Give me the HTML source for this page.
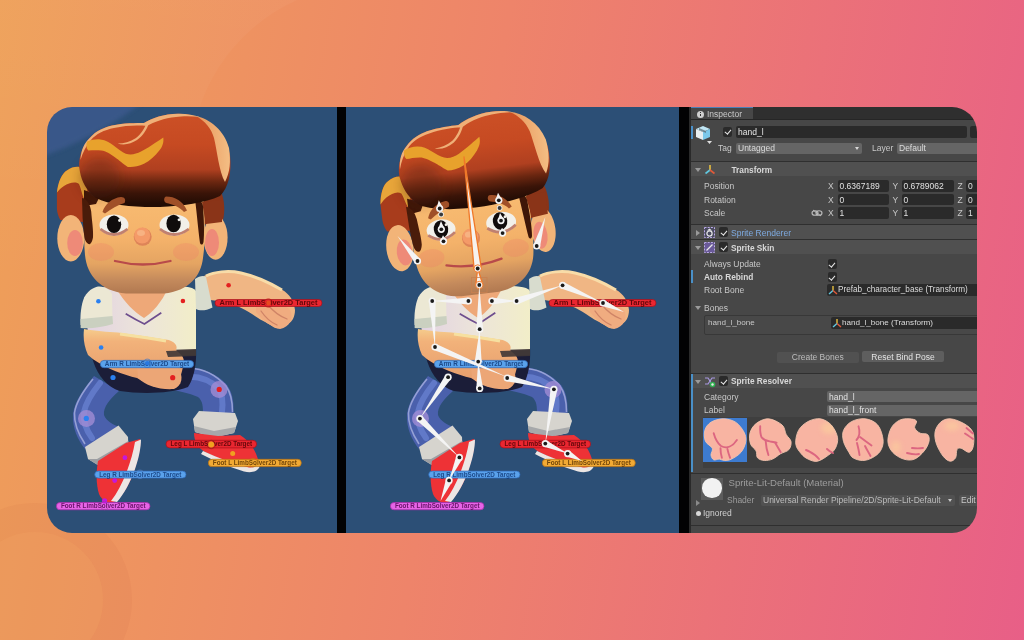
<!DOCTYPE html>
<html><head><meta charset="utf-8">
<style>
html,body{margin:0;padding:0;}
body{width:1024px;height:640px;overflow:hidden;position:relative;font-family:"Liberation Sans",sans-serif;
background:linear-gradient(100deg,#eea058 0%,#ee846a 45%,#e85f87 100%);}
.a{position:absolute;}
#clip{position:absolute;left:0;top:0;width:1024px;height:640px;clip-path:inset(107px 47px 107px 47px round 25px);will-change:transform;}
.t{position:absolute;font-size:8.5px;line-height:12px;height:12px;white-space:nowrap;color:#c8c8c8;}
.b{font-weight:bold;font-size:8.3px;}
.fld{position:absolute;background:#2a2a2a;border-radius:2px;}
.drp{position:absolute;background:#656565;border-radius:2px;}
.sep{position:absolute;left:691px;width:286px;height:1px;background:#2f2f2f;}
.hdr{position:absolute;left:691px;width:286px;background:#505050;}
.cb{position:absolute;width:9px;height:10px;background:#2a2a2a;border-radius:2px;}
.cb:after{content:"";position:absolute;left:2.5px;top:1.5px;width:2.5px;height:5px;border:solid #e8e8e8;border-width:0 1.3px 1.3px 0;transform:rotate(40deg);}
</style></head><body>
<svg class="a" id="bgdeco" style="left:0;top:0;" width="1024" height="640" viewBox="0 0 1024 640">
  <defs><linearGradient id="lgt" x1="0" y1="0" x2="0" y2="640" gradientUnits="userSpaceOnUse"><stop offset="0" stop-color="#fff" stop-opacity="0.035"/><stop offset="0.17" stop-color="#fff" stop-opacity="0.025"/><stop offset="0.45" stop-color="#fff" stop-opacity="0"/></linearGradient></defs><path d="M0,0 L297,0 A181,181 0 0 0 190,165 L190,640 L0,640 Z" fill="url(#lgt)"/>
  <circle cx="35" cy="600" r="97" fill="#b84020" opacity="0.05"/>
  <circle cx="35" cy="600" r="68" fill="#f0a060" opacity="0.35"/>
</svg>
<div id="clip">
  <!-- left panel -->
  <div class="a" style="left:47px;top:107px;width:290px;height:426px;background:#2c4f76;"></div>
  <div class="a" style="left:337px;top:107px;width:9px;height:426px;background:#020203;"></div>
  <div class="a" style="left:346px;top:107px;width:333px;height:426px;background:#2c4f76;"></div>
  <div class="a" style="left:679px;top:107px;width:10px;height:426px;background:#020203;"></div>
  <svg class="a" style="left:0;top:0;" width="1024" height="640" viewBox="0 0 1024 640">
<defs>
  <filter id="blur2" x="-10%" y="-10%" width="120%" height="120%"><feGaussianBlur stdDeviation="2"/></filter>
  <filter id="blur6" x="-50%" y="-50%" width="200%" height="200%"><feGaussianBlur stdDeviation="6"/></filter>
  <radialGradient id="glow" cx="50" cy="22" r="130" gradientUnits="userSpaceOnUse">
    <stop offset="0" stop-color="#3f5b90"/><stop offset="0.97" stop-color="#3d5a8e"/><stop offset="1" stop-color="#3d5a8e" stop-opacity="0"/>
  </radialGradient>
  <linearGradient id="faceG" x1="0" y1="194" x2="0" y2="294" gradientUnits="userSpaceOnUse">
    <stop offset="0" stop-color="#f8bc72"/><stop offset="0.45" stop-color="#f4b26a"/><stop offset="0.7" stop-color="#e4a462"/><stop offset="0.86" stop-color="#c48a5c"/><stop offset="1" stop-color="#b07850"/>
  </linearGradient>
  <linearGradient id="hairG" x1="0" y1="113" x2="0" y2="204" gradientUnits="userSpaceOnUse">
    <stop offset="0" stop-color="#cc5026"/><stop offset="0.35" stop-color="#c64a22"/><stop offset="0.62" stop-color="#b04020"/><stop offset="0.76" stop-color="#6a2610"/><stop offset="0.88" stop-color="#3a1408"/><stop offset="1" stop-color="#220c04"/>
  </linearGradient>
  <linearGradient id="rimG" x1="200" y1="0" x2="230" y2="0" gradientUnits="userSpaceOnUse">
    <stop offset="0" stop-color="#e89a60"/><stop offset="1" stop-color="#f4be84"/>
  </linearGradient>
  <linearGradient id="shirtG" x1="85" y1="0" x2="197" y2="0" gradientUnits="userSpaceOnUse">
    <stop offset="0" stop-color="#e2d2e2"/><stop offset="0.5" stop-color="#ece4da"/><stop offset="1" stop-color="#f2eec8"/>
  </linearGradient>
  <linearGradient id="armG" x1="0" y1="326" x2="0" y2="388" gradientUnits="userSpaceOnUse">
    <stop offset="0" stop-color="#f6d290"/><stop offset="0.25" stop-color="#f2b27a"/><stop offset="1" stop-color="#e49a6a"/>
  </linearGradient>
  <g id="body">
    <!-- left leg -->
    <path d="M94,376 C84,389 75,400 73,414 C72,428 78,440 85,449 L121,428 C114,425 106,421 104,415 C103,407 110,399 119,391 Z" fill="#4a60ac"/>
    <path d="M100,383 C92,393 86,402 84,412 C83,422 86,430 92,438" fill="none" stroke="#6680d0" stroke-width="6" opacity="0.8" stroke-linecap="round"/>
    <path d="M93,379 C84,390 76,401 74.5,413 C74,424 79,435 85,444" fill="none" stroke="#a8b0e0" stroke-width="1.6" opacity="0.8"/>
    <circle cx="86.5" cy="418.5" r="8.5" fill="#a08cd4" opacity="0.8"/>
    <path d="M85,447 L118.5,425.6 L128,437 L128.5,448 L98.6,465.5 L88,459 Z" fill="#d6d4ce"/>
    <path d="M88,459 L98.6,465.5 L128.5,448 L128.3,441 L97,459 Z" fill="#9c9ea2"/>
    <path d="M98,461 L126,443 L140,439 C141,447 139,456 133,474 C128,488 121,497 114,502 C109,504 103,502 99,494 C96,484 96,472 98,461 Z" fill="#ee3236"/>
    <path d="M135,442 L141,439.5 C141,455 132,485 117,502 L111,501 C123,486 132,460 135,442 Z" fill="#ece6e4"/>
    <!-- right leg -->
    <path d="M184,368 C198,366 215,372 227,385 C233,393 234,404 233.5,415 L203,415 C203,407 203,401 198,397 C188,393 180,391 172,390 Z" fill="#4a60ac"/>
    <path d="M186,377 C198,376 210,380 219,389 C223,396 223,404 222,412" fill="none" stroke="#6680d0" stroke-width="6" opacity="0.8" stroke-linecap="round"/>
    <path d="M188,368.5 C201,368 215,374 226,386 C231,393 232.5,402 232.5,412" fill="none" stroke="#a8b0e0" stroke-width="1.5" opacity="0.8"/>
    <circle cx="219" cy="389.5" r="8.5" fill="#a08cd4" opacity="0.8"/>
    <path d="M193,419 L199,411 L235,413 L238,421 L234,433 L214,437.5 L195,432 Z" fill="#d6d4ce"/>
    <path d="M195,432 L214,437.5 L234,433 L236,427 L214,431 L194,426 Z" fill="#a6a8aa"/>
    <path d="M194,433 L218,436 L240,435 C250,441 256,451 258.5,461 C258,467 253,469 247,468 C233,464 217,458 205,452 C198,448 194,441 194,433 Z" fill="#ee3236"/>
    <path d="M203,451 C218,458 234,464 249,467.5 C254,468 257,466 258.5,462 L259.5,467 C257,472 251,473 244,471.5 C229,467 214,461 201,454 Z" fill="#ece6e4"/>
    <!-- belt -->
    <path d="M90,350 L196,348 C197,365 193,380 188,387 C170,394 140,394 120,391 C104,386 95,372 90,350 Z" fill="#1b1d38"/>
    <!-- shirt -->
    <path d="M84,298 C92,289 104,286 118,286 L168,286 C182,286 192,286 196,291 L196,352 C170,357 120,357 90,350 Z" fill="url(#shirtG)"/>
    <path d="M116,288 L168,288 C162,302 152,313 144,318 C134,312 124,302 116,288 Z" fill="#eea878"/>
    <path d="M125.7,313.8 Q136,320 144.4,324 Q152,319 161.3,312.8" fill="none" stroke="#6e4e8e" stroke-width="1.7"/>
    <path d="M167,350 L196,349 L196,355 L168,356 Z" fill="#4a4040"/>
    <!-- extended arm -->
    <path d="M204,276 C212,272 228,269 241,272.5 C255,276 270,283 282.5,290 C289,294 294,300 295,310 C295,317 292,322 288,324 C282,329 276,330 272,326 C266,322 260,320 252,314 C240,306 228,302 210,300 Z" fill="#f0b684"/>
    <path d="M206,276 C214,272 228,270 241,273 C255,276 270,283 282,290" fill="none" stroke="#f8dca8" stroke-width="3"/>
    <path d="M256,302 C266,298 282,301 290,310 C294,318 290,327 280,329 C271,327 263,321 256,312 Z" fill="#f0ac80"/><path d="M261,311 C265,317 270,322 277,325 M268,305 C273,311 279,316 287,319" fill="none" stroke="#cf8466" stroke-width="1.3" stroke-linecap="round"/>
    <path d="M195,279 C199,276 204,275 206,277 L212.5,307.5 C206,311 199,311 196,309 Z" fill="#d8dcce"/>
    <!-- left sleeve + forearm -->
    <path d="M84,329 C95,331 108,332 118,332.5 C135,335 150,337 168.8,340 C175,342 178,346 176,350 C180,354 184,356 184,362 C182,372 180,380 176,386 C166,390 150,386 137,378 C120,374 100,366 88,355 C84,346 83,338 84,329 Z" fill="url(#armG)"/>
    <path d="M120,334 C135,336 150,338 166,341" fill="none" stroke="#f6e0a0" stroke-width="3"/>
    <path d="M137,366 C148,362 168,362 178,368 C184,376 182,386 174,389 C160,390 146,386 138,378 Z" fill="#eca676"/>
    <path d="M166,351 L196,350 L196,356 L168,357 Z" fill="#3e3636" opacity="0.9"/>
    <path d="M84.4,297 C89,289 96,286.6 99.4,286.6 C106,287 110,290 112,294 L112.5,320.3 C103,323 91,325 80.6,325 C80,315 81,305 84.4,297 Z" fill="#ece8d4"/>
    <path d="M80.6,319 L112.5,316 L113,324 C103,327 91,329 80.6,328 Z" fill="#cad0c0"/>
  </g>
  <g id="head">
    <!-- side hair left -->
    <path d="M56.9,192.6 C58,182 62,173 67.2,170.3 C71,167.5 75,166.5 79.2,166.9 C85,168 88,178 89.5,191 C90.5,200 91,206 91.2,211.5 L92,222 L82.6,222 L60.3,220 C58,216 57,212 56.9,208 Z" fill="#a83c1c"/>
    <path d="M56.9,192.6 C58,182 62,173 67.2,170.3 C71,167.5 75,166.5 79.2,166.9 C84,168 87,176 88,186 C87,192 86,197 84.4,199.5 C82,195 81,188 79,184 C75,181 69,183 64,186 C61,188 59,190 56.9,192.6 Z" fill="#e8a63a"/>
    <!-- side hair right -->
    <path d="M194,196 L222,194 C225,204 225,214 222,224 L214,226 L203,224 Z" fill="#8a3418"/>
    <!-- ears -->
    <ellipse cx="70.8" cy="238.2" rx="13.5" ry="23.2" fill="#f2b478"/>
    <ellipse cx="75" cy="243" rx="7.8" ry="13" fill="#ee8a78"/>
    <ellipse cx="215.6" cy="237.6" rx="12" ry="22.2" fill="#f2b478"/>
    <ellipse cx="212" cy="242.5" rx="7" ry="13.5" fill="#ee8a78"/>
    <!-- face -->
    <path d="M88,194 C86,215 83,235 85,255 C87,276 101,291 126,293.5 L164,293.5 C189,291 201,276 203,258 C206,238 205,218 203,194 Z" fill="url(#faceG)"/><path d="M84,190 L100,196 L96,204 L84,206 Z" fill="#3e1608"/>
    <path d="M82,198 C87,199 90,204 91.2,211.5 C92,222 93.5,230 93,237.3 C92.5,241 91,244 89.5,244.2 C87,244 85,241 84.4,237.3 C83.5,230 83,224 82.6,218 Z" fill="#4a1c0a"/>
    <path d="M202,202 L222,200 L222,222 L206,224 Z" fill="#8a3418"/><path d="M195,199 C199,199 202,201 203,206 C204,220 204.5,234 203.5,242 C203,245 201,245.5 200,243 C198.5,232 197,215 195,199 Z" fill="#3e1608"/>
    <ellipse cx="101" cy="252" rx="13" ry="9" fill="#f07868" opacity="0.25"/>
    <ellipse cx="186" cy="252" rx="13" ry="9" fill="#f07868" opacity="0.25"/>
    <!-- eyes -->
    <ellipse cx="114" cy="225" rx="14.5" ry="10.5" fill="#f2f0ea"/>
    <path d="M100.5,229 Q114,240 127.5,229" fill="none" stroke="#c08070" stroke-width="2.8"/>
    <ellipse cx="114" cy="224.3" rx="7.2" ry="8.8" fill="#100c0c"/>
    <circle cx="119.5" cy="220.5" r="1.4" fill="#f2f0ea"/>
    <ellipse cx="174.5" cy="225" rx="15" ry="10.5" fill="#f2f0ea"/>
    <path d="M160,229 Q174,240 188.7,229" fill="none" stroke="#c08070" stroke-width="2.8"/>
    <ellipse cx="173.6" cy="223.5" rx="7.2" ry="8.8" fill="#100c0c"/>
    <circle cx="179" cy="219.8" r="1.4" fill="#f2f0ea"/>
    <!-- nose -->
    <circle cx="142.7" cy="236.8" r="9" fill="#de8458"/>
    <circle cx="142.2" cy="235.5" r="8" fill="#f49a68"/><ellipse cx="141" cy="233" rx="4" ry="3" fill="#f8b888" opacity="0.8"/>
    <!-- mouth -->
    <path d="M115,261 Q143,268 170.5,261" fill="none" stroke="#b84a4a" stroke-width="2.3" stroke-linecap="round"/>
    <!-- hair top -->
    <path d="M80,172 C77,160 82,146 90.2,137.4 C96,131 104,127.5 112,125.5 C124,123 136,123 144,123 C152,118 164,114 178,113.8 C206,114 224,130 230,155 C232,174 228,188 220,196 C205,203 182,206 160,207 C134,207.5 110,205 96,198 C86,190 82,182 80,172 Z" fill="url(#hairG)"/>
    
    <ellipse cx="100" cy="178" rx="20" ry="20" fill="#4a1a0a" opacity="0.35" filter="url(#blur6)"/>
    <path d="M196,116 C210,119 224,130 229,148 C231,162 230,172 225,182 C219,172 217,150 214,138 C211,128 205,121 196,116 Z" fill="url(#rimG)"/>
    <path d="M80.5,160 C81,150 84,143 90.2,137.4 C96,131 104,127.5 112,125.5 C124,123 136,123 144,123 C152,118 164,114 178,113.8 C186,113.6 194,115 200,117 C192,116 182,116 176,117 C164,118 154,122 147,126 C140,125 126,125 114,128 C104,130 96,134 91,140 C86,146 83,152 80.5,160 Z" fill="#efb078"/>
    <path d="M147,121.5 C145,128 141,134 136,138 C130,142 124,143.5 117.6,143.5 C124,145.5 131,144 137,140 C143,136 147,129 149,123 Z" fill="#efb078"/>
    <path d="M87.2,141.5 C92,139.5 96,139 100.4,139.4 C106,140 110,142.5 113.6,145.5 C118,149 122,152 125.8,153.7 C131,155.5 136,154 141,151.6 C147,148 151,146 154.2,143.5 C158,141 161,139 163.3,137.4 C164,143 162,147 159.3,150.6 C155,156 150,161 144,163.8 C138,166.5 132,167.5 127.8,166.9 C122,163 119,160 115.6,157.7 C110,154 106,151 101.4,150.6 C96,150 92,150.5 88.2,150.6 C86,148 86,144 87.2,141.5 Z" fill="#e8a22c"/>
    
    <!-- eyebrows -->
    <path d="M102.5,212 C105,204 112,198 121,197 C125,197 126,200 124.5,203 C118,205 111,209 105,213.5 Z" fill="#a05028"/>
    <path d="M166,196.5 C175,196.5 183,201 187,210.5 L184,212 C180,207 172,204 166.5,203 C163.5,202 163.5,197.5 166,196.5 Z" fill="#a05028"/>
  </g>
</defs>
<rect x="47" y="107" width="290" height="426" fill="#2c4f76"/>
<path d="M47,107 L180,107 A130,130 0 0 1 47,152 Z" fill="url(#glow)" opacity="0"/>
<circle cx="-62" cy="-157" r="330" fill="#3d5a8e" opacity="0.8" filter="url(#blur2)"/>
<use href="#body"/>
<use href="#head"/>
<use href="#body" transform="translate(334,0)"/>
<use href="#head" transform="translate(334.8,0.8) rotate(-7,143,290)"/>
<g id="labelsL">
<rect x="215" y="299.5" width="107" height="7" rx="3.5" fill="#ea2630" stroke="#a8101a" stroke-width="0.7"/>
<text x="268.5" y="305.1" text-anchor="middle" font-family="Liberation Sans" font-size="6.4" font-weight="bold" fill="#4a0204" fill-opacity="0.85" textLength="98" lengthAdjust="spacingAndGlyphs">Arm  L  LimbSolver2D  Target</text>
<rect x="100.3" y="360.4" width="93.4" height="7.3" rx="3.65" fill="#5aa2ec" stroke="#2e68b8" stroke-width="0.7"/>
<text x="147.0" y="366.15" text-anchor="middle" font-family="Liberation Sans" font-size="6.4" font-weight="bold" fill="#123a78" fill-opacity="0.85" textLength="84.4" lengthAdjust="spacingAndGlyphs">Arm  R  LimbSolver2D  Target</text>
<rect x="166" y="440.3" width="90.6" height="7.6" rx="3.8" fill="#ea2630" stroke="#a8101a" stroke-width="0.7"/>
<text x="211.3" y="446.20000000000005" text-anchor="middle" font-family="Liberation Sans" font-size="6.4" font-weight="bold" fill="#4a0204" fill-opacity="0.85" textLength="81.6" lengthAdjust="spacingAndGlyphs">Leg  L  LimbSolver2D  Target</text>
<rect x="208.3" y="459.3" width="93" height="7.3" rx="3.65" fill="#f2aa34" stroke="#b87010" stroke-width="0.7"/>
<text x="254.8" y="465.05" text-anchor="middle" font-family="Liberation Sans" font-size="6.4" font-weight="bold" fill="#5a3402" fill-opacity="0.85" textLength="84" lengthAdjust="spacingAndGlyphs">Foot  L  LimbSolver2D  Target</text>
<rect x="94.7" y="471.1" width="91.3" height="7" rx="3.5" fill="#5aa2ec" stroke="#2e68b8" stroke-width="0.7"/>
<text x="140.35" y="476.70000000000005" text-anchor="middle" font-family="Liberation Sans" font-size="6.4" font-weight="bold" fill="#123a78" fill-opacity="0.85" textLength="82.3" lengthAdjust="spacingAndGlyphs">Leg  R  LimbSolver2D  Target</text>
<rect x="56.4" y="502.5" width="93.6" height="7.3" rx="3.65" fill="#e664e6" stroke="#a828a8" stroke-width="0.7"/>
<text x="103.19999999999999" y="508.25" text-anchor="middle" font-family="Liberation Sans" font-size="6.4" font-weight="bold" fill="#520652" fill-opacity="0.85" textLength="84.6" lengthAdjust="spacingAndGlyphs">Foot  R  LimbSolver2D  Target</text>
</g>
<g id="dots">
<circle cx="268.4" cy="303" r="2.4" fill="#e84a20"/>
<circle cx="147.3" cy="363.3" r="2.3" fill="#2a78e0"/>
<circle cx="98.4" cy="301.3" r="2.3" fill="#2a80f0"/>
<circle cx="182.9" cy="301" r="2.3" fill="#e42020"/>
<circle cx="228.6" cy="285.3" r="2.3" fill="#e42020"/>
<circle cx="101.1" cy="347.5" r="2.3" fill="#2a80f0"/>
<circle cx="113" cy="377.5" r="2.6" fill="#2a80f0"/>
<circle cx="172.7" cy="377.7" r="2.6" fill="#e42020"/>
<circle cx="219.2" cy="389.4" r="2.6" fill="#e42020"/>
<circle cx="86.3" cy="418.4" r="2.6" fill="#2a80f0"/>
<circle cx="124.9" cy="457.7" r="2.4" fill="#c418dc"/>
<circle cx="114.7" cy="480.6" r="2.4" fill="#c418dc"/>
<circle cx="211.2" cy="444.5" r="3" fill="#f0a020"/>
<circle cx="232.7" cy="453.4" r="2.5" fill="#f0a020"/>
<circle cx="104.6" cy="500.9" r="2.6" fill="#c418dc"/>
<circle cx="268.4" cy="303" r="4.2" fill="none" stroke="#c01010" stroke-width="0.8" opacity="0.8"/>
<circle cx="147.3" cy="363.3" r="4.2" fill="none" stroke="#2a70d0" stroke-width="0.8" opacity="0.8"/>
<circle cx="140" cy="474.3" r="4.2" fill="none" stroke="#5a8ad0" stroke-width="0.8" opacity="0.8"/>
<circle cx="253" cy="462.6" r="4.2" fill="none" stroke="#c08010" stroke-width="0.8" opacity="0.8"/>
<circle cx="211.2" cy="444.5" r="4.2" fill="none" stroke="#902010" stroke-width="0.8" opacity="0.8"/>
<circle cx="104.6" cy="505.5" r="4.2" fill="none" stroke="#a040a0" stroke-width="0.8" opacity="0.8"/>
</g>
<g transform="translate(334,0)"><g >
<rect x="215" y="299.5" width="107" height="7" rx="3.5" fill="#ea2630" stroke="#a8101a" stroke-width="0.7"/>
<text x="268.5" y="305.1" text-anchor="middle" font-family="Liberation Sans" font-size="6.4" font-weight="bold" fill="#4a0204" fill-opacity="0.85" textLength="98" lengthAdjust="spacingAndGlyphs">Arm  L  LimbSolver2D  Target</text>
<rect x="100.3" y="360.4" width="93.4" height="7.3" rx="3.65" fill="#5aa2ec" stroke="#2e68b8" stroke-width="0.7"/>
<text x="147.0" y="366.15" text-anchor="middle" font-family="Liberation Sans" font-size="6.4" font-weight="bold" fill="#123a78" fill-opacity="0.85" textLength="84.4" lengthAdjust="spacingAndGlyphs">Arm  R  LimbSolver2D  Target</text>
<rect x="166" y="440.3" width="90.6" height="7.6" rx="3.8" fill="#ea2630" stroke="#a8101a" stroke-width="0.7"/>
<text x="211.3" y="446.20000000000005" text-anchor="middle" font-family="Liberation Sans" font-size="6.4" font-weight="bold" fill="#4a0204" fill-opacity="0.85" textLength="81.6" lengthAdjust="spacingAndGlyphs">Leg  L  LimbSolver2D  Target</text>
<rect x="208.3" y="459.3" width="93" height="7.3" rx="3.65" fill="#f2aa34" stroke="#b87010" stroke-width="0.7"/>
<text x="254.8" y="465.05" text-anchor="middle" font-family="Liberation Sans" font-size="6.4" font-weight="bold" fill="#5a3402" fill-opacity="0.85" textLength="84" lengthAdjust="spacingAndGlyphs">Foot  L  LimbSolver2D  Target</text>
<rect x="94.7" y="471.1" width="91.3" height="7" rx="3.5" fill="#5aa2ec" stroke="#2e68b8" stroke-width="0.7"/>
<text x="140.35" y="476.70000000000005" text-anchor="middle" font-family="Liberation Sans" font-size="6.4" font-weight="bold" fill="#123a78" fill-opacity="0.85" textLength="82.3" lengthAdjust="spacingAndGlyphs">Leg  R  LimbSolver2D  Target</text>
<rect x="56.4" y="502.5" width="93.6" height="7.3" rx="3.65" fill="#e664e6" stroke="#a828a8" stroke-width="0.7"/>
<text x="103.19999999999999" y="508.25" text-anchor="middle" font-family="Liberation Sans" font-size="6.4" font-weight="bold" fill="#520652" fill-opacity="0.85" textLength="84.6" lengthAdjust="spacingAndGlyphs">Foot  R  LimbSolver2D  Target</text>
</g>
</g><g id="bones">
<polygon points="481.3,268.1 464.0,157.0 474.1,268.9" fill="#f6f2ee" stroke="#f07828" stroke-width="1.3" stroke-linejoin="round"/>
<polygon points="482.9,284.7 477.7,268.5 475.7,285.3" fill="#f6f2ee" stroke="#f07828" stroke-width="1.3" stroke-linejoin="round"/>
<circle cx="477.7" cy="268.5" r="3.7" fill="#f6f2ee" stroke="#f07828" stroke-width="0.9"/><circle cx="477.7" cy="268.5" r="1.9" fill="#1a1a1a"/>
<circle cx="479.3" cy="285" r="3.7" fill="#f6f2ee" stroke="#f07828" stroke-width="0.9"/><circle cx="479.3" cy="285" r="1.9" fill="#1a1a1a"/>
<rect x="471.5" y="277.5" width="15.5" height="15" fill="none" stroke="#c88050" stroke-width="0.9" opacity="0.85"/>
<polygon points="483.1,388.2 478.2,361.6 476.3,388.6" fill="#f4f4f4"/>
<polygon points="481.6,361.8 479.7,329.2 474.8,361.4" fill="#f4f4f4"/>
<polygon points="483.1,329.2 479.3,285.0 476.3,329.2" fill="#f4f4f4"/>
<polygon points="468.4,297.6 432.2,301.0 468.4,304.4" fill="#f4f4f4"/>
<polygon points="428.8,301.2 435.0,347.0 435.6,300.8" fill="#f4f4f4"/>
<polygon points="433.7,350.1 507.0,377.0 436.3,343.9" fill="#f4f4f4"/>
<polygon points="491.9,304.4 516.6,301.0 491.9,297.6" fill="#f4f4f4"/>
<polygon points="517.7,304.2 562.6,285.3 515.5,297.8" fill="#f4f4f4"/>
<polygon points="561.2,288.4 603.0,303.0 564.0,282.2" fill="#f4f4f4"/>
<polygon points="601.7,306.1 624.0,312.0 604.3,299.9" fill="#f4f4f4"/>
<polygon points="445.3,375.3 419.9,418.6 450.9,379.1" fill="#f4f4f4"/>
<polygon points="417.5,421.0 459.4,457.4 422.3,416.2" fill="#f4f4f4"/>
<polygon points="456.3,456.0 449.1,480.4 462.5,458.8" fill="#f4f4f4"/>
<polygon points="446.0,479.1 440.5,501.0 452.2,481.7" fill="#f4f4f4"/>
<polygon points="506.4,381.3 553.9,389.3 508.0,374.7" fill="#f4f4f4"/>
<polygon points="550.5,388.8 545.3,443.6 557.3,389.8" fill="#f4f4f4"/>
<polygon points="543.9,446.7 567.6,453.6 546.7,440.5" fill="#f4f4f4"/>
<polygon points="566.0,456.6 582.0,461.0 569.2,450.6" fill="#f4f4f4"/>
<polygon points="420.2,258.9 397.5,236.0 414.8,263.1" fill="#f4f4f4"/>
<polygon points="540.0,247.0 545.3,217.0 533.4,245.0" fill="#f4f4f4"/>
<polygon points="443.1,208.1 438.8,200.3 436.3,208.9" fill="#f4f4f4"/>
<polygon points="444.7,229.2 441.0,221.0 437.9,229.4" fill="#f4f4f4"/>
<polygon points="446.9,241.0 443.0,235.3 440.1,241.6" fill="#f4f4f4"/>
<polygon points="502.2,199.9 498.0,192.7 495.4,200.7" fill="#f4f4f4"/>
<polygon points="504.4,220.2 500.0,212.9 497.6,221.0" fill="#f4f4f4"/>
<polygon points="506.0,232.7 502.0,227.7 499.2,233.5" fill="#f4f4f4"/>
<circle cx="479.7" cy="388.4" r="3.6" fill="#f4f4f4"/><circle cx="479.7" cy="388.4" r="1.9" fill="#1a1a1a"/>
<circle cx="478.2" cy="361.6" r="3.6" fill="#f4f4f4"/><circle cx="478.2" cy="361.6" r="1.9" fill="#1a1a1a"/>
<circle cx="479.7" cy="329.2" r="3.6" fill="#f4f4f4"/><circle cx="479.7" cy="329.2" r="1.9" fill="#1a1a1a"/>
<circle cx="468.4" cy="301" r="3.6" fill="#f4f4f4"/><circle cx="468.4" cy="301" r="1.9" fill="#1a1a1a"/>
<circle cx="432.2" cy="301" r="3.6" fill="#f4f4f4"/><circle cx="432.2" cy="301" r="1.9" fill="#1a1a1a"/>
<circle cx="435" cy="347" r="3.6" fill="#f4f4f4"/><circle cx="435" cy="347" r="1.9" fill="#1a1a1a"/>
<circle cx="491.9" cy="301" r="3.6" fill="#f4f4f4"/><circle cx="491.9" cy="301" r="1.9" fill="#1a1a1a"/>
<circle cx="516.6" cy="301" r="3.6" fill="#f4f4f4"/><circle cx="516.6" cy="301" r="1.9" fill="#1a1a1a"/>
<circle cx="562.6" cy="285.3" r="3.6" fill="#f4f4f4"/><circle cx="562.6" cy="285.3" r="1.9" fill="#1a1a1a"/>
<circle cx="603" cy="303" r="3.6" fill="#f4f4f4"/><circle cx="603" cy="303" r="1.9" fill="#1a1a1a"/>
<circle cx="448.1" cy="377.2" r="3.6" fill="#f4f4f4"/><circle cx="448.1" cy="377.2" r="1.9" fill="#1a1a1a"/>
<circle cx="419.9" cy="418.6" r="3.6" fill="#f4f4f4"/><circle cx="419.9" cy="418.6" r="1.9" fill="#1a1a1a"/>
<circle cx="459.4" cy="457.4" r="3.6" fill="#f4f4f4"/><circle cx="459.4" cy="457.4" r="1.9" fill="#1a1a1a"/>
<circle cx="449.1" cy="480.4" r="3.6" fill="#f4f4f4"/><circle cx="449.1" cy="480.4" r="1.9" fill="#1a1a1a"/>
<circle cx="507.2" cy="378" r="3.6" fill="#f4f4f4"/><circle cx="507.2" cy="378" r="1.9" fill="#1a1a1a"/>
<circle cx="553.9" cy="389.3" r="3.6" fill="#f4f4f4"/><circle cx="553.9" cy="389.3" r="1.9" fill="#1a1a1a"/>
<circle cx="545.3" cy="443.6" r="3.6" fill="#f4f4f4"/><circle cx="545.3" cy="443.6" r="1.9" fill="#1a1a1a"/>
<circle cx="567.6" cy="453.6" r="3.6" fill="#f4f4f4"/><circle cx="567.6" cy="453.6" r="1.9" fill="#1a1a1a"/>
<circle cx="417.5" cy="261" r="3.6" fill="#f4f4f4"/><circle cx="417.5" cy="261" r="1.9" fill="#1a1a1a"/>
<circle cx="536.7" cy="246" r="3.6" fill="#f4f4f4"/><circle cx="536.7" cy="246" r="1.9" fill="#1a1a1a"/>
<circle cx="439.7" cy="208.5" r="3.6" fill="#f4f4f4"/><circle cx="439.7" cy="208.5" r="1.9" fill="#1a1a1a"/>
<circle cx="441.3" cy="229.3" r="3.6" fill="#f4f4f4"/><circle cx="441.3" cy="229.3" r="1.9" fill="#1a1a1a"/>
<circle cx="443.5" cy="241.3" r="3.6" fill="#f4f4f4"/><circle cx="443.5" cy="241.3" r="1.9" fill="#1a1a1a"/>
<circle cx="498.8" cy="200.3" r="3.6" fill="#f4f4f4"/><circle cx="498.8" cy="200.3" r="1.9" fill="#1a1a1a"/>
<circle cx="501" cy="220.6" r="3.6" fill="#f4f4f4"/><circle cx="501" cy="220.6" r="1.9" fill="#1a1a1a"/>
<circle cx="502.6" cy="233.1" r="3.6" fill="#f4f4f4"/><circle cx="502.6" cy="233.1" r="1.9" fill="#1a1a1a"/>
<circle cx="441.1" cy="214.5" r="2.8" fill="#f0f0f0"/><circle cx="441.1" cy="214.5" r="2" fill="#3a3a3a"/>
<circle cx="499.6" cy="208" r="2.8" fill="#f0f0f0"/><circle cx="499.6" cy="208" r="2" fill="#3a3a3a"/>
</g>
</svg>

<!-- inspector -->
  <div class="a" style="left:689px;top:107px;width:288px;height:426px;background:#474747;"></div>
  <div class="a" style="left:689px;top:107px;width:2px;height:426px;background:#2a2a2a;"></div>
  <div class="a" style="left:691px;top:107px;width:286px;height:12px;background:#2f2f2f;"></div>
  <div class="a" style="left:691px;top:107px;width:62px;height:12px;background:#474747;border-top:1px solid #4b7fb8;box-sizing:border-box;"></div>
  <div class="a" style="left:691px;top:119px;width:286px;height:1px;background:#262626;"></div>
  <div class="a" style="left:696.5px;top:110.5px;width:7px;height:7px;border-radius:50%;background:#d0d0d0;"></div>
  <div class="a" style="left:699.5px;top:112px;width:1px;height:1px;background:#333;"></div>
  <div class="a" style="left:699.5px;top:113.5px;width:1px;height:2.5px;background:#333;"></div>
  <div class="t" style="left:707px;top:108px;">Inspector</div>

  <!-- object header -->
  <div class="a" style="left:691px;top:126px;width:2px;height:13px;background:#4a90c8;"></div>
  <svg class="a" style="left:694px;top:124px;" width="20" height="22" viewBox="0 0 20 22">
    <polygon points="9,2 16,5 9,8 2,5" fill="#bfe6f5"/>
    <polygon points="2,5 9,8 9,16 2,13" fill="#e8eef0"/>
    <polygon points="9,8 16,5 16,13 9,16" fill="#7cc8ea"/>
    <polygon points="5,4 12,7 12,9 5,6" fill="#5a6a74" opacity="0.7"/>
    <polygon points="13,17 18,17 15.5,20" fill="#e0e0e0"/>
  </svg>
  <div class="cb" style="left:723px;top:126.5px;"></div>
  <div class="fld" style="left:736px;top:126px;width:231px;height:11.5px;"></div>
  <div class="t" style="left:738px;top:126px;color:#e6e6e6;">hand_l</div>
  <div class="fld" style="left:970px;top:126px;width:10px;height:11.5px;"></div>
  <div class="t" style="left:718px;top:142px;">Tag</div>
  <div class="drp" style="left:736px;top:143px;width:126px;height:10.5px;"></div>
  <div class="t" style="left:738px;top:142px;color:#dcdcdc;">Untagged</div>
  <div class="a" style="left:855px;top:147px;width:0;height:0;border-left:2.5px solid transparent;border-right:2.5px solid transparent;border-top:3px solid #d8d8d8;"></div>
  <div class="t" style="left:872px;top:142px;">Layer</div>
  <div class="drp" style="left:897px;top:143px;width:90px;height:10.5px;"></div>
  <div class="t" style="left:899px;top:142px;color:#dcdcdc;">Default</div>
  <!-- transform -->
  <div class="sep" style="top:161px;"></div>
  <div class="hdr" style="top:162px;height:14px;"></div>
  <div class="a" style="left:694.5px;top:168px;width:0;height:0;border-left:3px solid transparent;border-right:3px solid transparent;border-top:4.5px solid #9a9a9a;"></div>
  <svg class="a" style="left:704px;top:164px;" width="12" height="11" viewBox="0 0 12 11">
    <line x1="6" y1="6" x2="6" y2="1" stroke="#e8c040" stroke-width="1.6"/>
    <line x1="6" y1="6" x2="1.5" y2="9.5" stroke="#60c8e0" stroke-width="1.6"/>
    <line x1="6" y1="6" x2="10.5" y2="9.5" stroke="#e05a3a" stroke-width="1.6"/>
  </svg>
  <div class="t b" style="left:731.5px;top:163.5px;color:#d8d8d8;">Transform</div>
  <div class="t" style="left:704px;top:180px;">Position</div>
  <div class="t" style="left:704px;top:193.5px;">Rotation</div>
  <div class="t" style="left:704px;top:207px;">Scale</div>
  <svg class="a" style="left:811px;top:209px;" width="12" height="8" viewBox="0 0 12 8">
    <ellipse cx="4" cy="4" rx="3" ry="2.3" fill="none" stroke="#bbb" stroke-width="1.1"/>
    <ellipse cx="8" cy="4" rx="3" ry="2.3" fill="none" stroke="#bbb" stroke-width="1.1"/>
    <line x1="2" y1="1" x2="10" y2="7" stroke="#bbb" stroke-width="1"/>
  </svg>
  <div class="t" style="left:828px;top:180px;">X</div>
<div class="fld" style="left:837.5px;top:180px;width:51px;height:11.5px;"></div>
<div class="t" style="left:839.5px;top:180px;color:#e0e0e0;">0.6367189</div>
<div class="t" style="left:892.5px;top:180px;">Y</div>
<div class="fld" style="left:901.5px;top:180px;width:52px;height:11.5px;"></div>
<div class="t" style="left:903.5px;top:180px;color:#e0e0e0;">0.6789062</div>
<div class="t" style="left:957.5px;top:180px;">Z</div>
<div class="fld" style="left:966px;top:180px;width:20px;height:11.5px;"></div>
<div class="t" style="left:968px;top:180px;color:#e0e0e0;">0</div>
<div class="t" style="left:828px;top:193.5px;">X</div>
<div class="fld" style="left:837.5px;top:193.5px;width:51px;height:11.5px;"></div>
<div class="t" style="left:839.5px;top:193.5px;color:#e0e0e0;">0</div>
<div class="t" style="left:892.5px;top:193.5px;">Y</div>
<div class="fld" style="left:901.5px;top:193.5px;width:52px;height:11.5px;"></div>
<div class="t" style="left:903.5px;top:193.5px;color:#e0e0e0;">0</div>
<div class="t" style="left:957.5px;top:193.5px;">Z</div>
<div class="fld" style="left:966px;top:193.5px;width:20px;height:11.5px;"></div>
<div class="t" style="left:968px;top:193.5px;color:#e0e0e0;">0</div>
<div class="t" style="left:828px;top:207px;">X</div>
<div class="fld" style="left:837.5px;top:207px;width:51px;height:11.5px;"></div>
<div class="t" style="left:839.5px;top:207px;color:#e0e0e0;">1</div>
<div class="t" style="left:892.5px;top:207px;">Y</div>
<div class="fld" style="left:901.5px;top:207px;width:52px;height:11.5px;"></div>
<div class="t" style="left:903.5px;top:207px;color:#e0e0e0;">1</div>
<div class="t" style="left:957.5px;top:207px;">Z</div>
<div class="fld" style="left:966px;top:207px;width:20px;height:11.5px;"></div>
<div class="t" style="left:968px;top:207px;color:#e0e0e0;">1</div>

  <!-- sprite renderer -->
  <div class="sep" style="top:224px;"></div>
  <div class="hdr" style="top:225px;height:14px;"></div>
  <div class="a" style="left:695.5px;top:229.5px;width:0;height:0;border-top:3px solid transparent;border-bottom:3px solid transparent;border-left:4.5px solid #9a9a9a;"></div>
  <svg class="a" style="left:704px;top:227px;" width="11" height="11" viewBox="0 0 11 11">
    <rect x="0.5" y="0.5" width="10" height="10" fill="#4a4a60" stroke="#b9a8e8" stroke-width="1" stroke-dasharray="2 1.2"/>
    <circle cx="5.5" cy="6.5" r="2.6" fill="none" stroke="#e8e8e8" stroke-width="1.2"/>
    <path d="M3,3.5 L8,3.5 L5.5,1.5 Z" fill="#e8e8e8"/>
  </svg>
  <div class="cb" style="left:719px;top:227px;"></div>
  <div class="t" style="left:731px;top:226.5px;color:#7eaae0;">Sprite Renderer</div>
  <div class="sep" style="top:239px;"></div>
  <div class="hdr" style="top:240px;height:14px;"></div>
  <div class="a" style="left:694.5px;top:245.5px;width:0;height:0;border-left:3px solid transparent;border-right:3px solid transparent;border-top:4.5px solid #9a9a9a;"></div>
  <svg class="a" style="left:704px;top:242px;" width="11" height="11" viewBox="0 0 11 11">
    <rect x="0.5" y="0.5" width="10" height="10" fill="#6a5a9a" stroke="#b9a8e8" stroke-width="1" stroke-dasharray="2 1.2"/>
    <path d="M2.5,8.5 L8.5,2.5" stroke="#e8e8e8" stroke-width="1.3"/>
  </svg>
  <div class="cb" style="left:719px;top:242px;"></div>
  <div class="t b" style="left:731px;top:241.5px;color:#d8d8d8;">Sprite Skin</div>
  <div class="t" style="left:704px;top:257.5px;">Always Update</div>
  <div class="cb" style="left:827.5px;top:259px;"></div>
  <div class="a" style="left:691px;top:270px;width:2px;height:13px;background:#4a90c8;"></div>
  <div class="t b" style="left:704px;top:270.5px;color:#d8d8d8;">Auto Rebind</div>
  <div class="cb" style="left:827.5px;top:272px;"></div>
  <div class="t" style="left:704px;top:284px;">Root Bone</div>
  <div class="fld" style="left:827px;top:284px;width:160px;height:12px;"></div>
  <svg class="a" style="left:828px;top:285px;" width="10" height="10" viewBox="0 0 10 10">
    <line x1="5" y1="5.5" x2="5" y2="1" stroke="#e8c040" stroke-width="1.4"/>
    <line x1="5" y1="5.5" x2="1" y2="9" stroke="#60c8e0" stroke-width="1.4"/>
    <line x1="5" y1="5.5" x2="9" y2="9" stroke="#e05a3a" stroke-width="1.4"/></svg>
  <div class="t" style="left:838px;top:284px;color:#dcdcdc;font-size:8.2px;">Prefab_character_base (Transform)</div>
  <div class="a" style="left:695px;top:305.5px;width:0;height:0;border-left:3px solid transparent;border-right:3px solid transparent;border-top:4.5px solid #9a9a9a;"></div>
  <div class="t" style="left:704px;top:302px;">Bones</div>
  <div class="a" style="left:704px;top:315px;width:280px;height:20px;background:#484848;border:1px solid #383838;box-sizing:border-box;border-radius:2px;"></div>
  <div class="t" style="left:708px;top:317px;font-size:8.1px;">hand_l_bone</div>
  <div class="fld" style="left:831px;top:317px;width:160px;height:12px;"></div>
  <svg class="a" style="left:832px;top:318px;" width="10" height="10" viewBox="0 0 10 10">
    <line x1="5" y1="5.5" x2="5" y2="1" stroke="#e8c040" stroke-width="1.4"/>
    <line x1="5" y1="5.5" x2="1" y2="9" stroke="#60c8e0" stroke-width="1.4"/>
    <line x1="5" y1="5.5" x2="9" y2="9" stroke="#e05a3a" stroke-width="1.4"/></svg>
  <div class="t" style="left:842px;top:317px;color:#dcdcdc;font-size:8.1px;">hand_l_bone (Transform)</div>
  <div class="a" style="left:777px;top:351.5px;width:81.5px;height:11px;background:#515151;border-radius:2px;"></div>
  <div class="t" style="left:777px;width:81.5px;text-align:center;top:351px;color:#bdbdbd;">Create Bones</div>
  <div class="a" style="left:862px;top:351px;width:82px;height:11px;background:#5e5e5e;border-radius:2px;"></div>
  <div class="t" style="left:862px;width:82px;text-align:center;top:350.5px;color:#e4e4e4;">Reset Bind Pose</div>
  <!-- sprite resolver -->
  <div class="sep" style="top:373px;"></div>
  <div class="hdr" style="top:374px;height:14px;"></div>
  <div class="a" style="left:691px;top:374px;width:2px;height:98px;background:#4a90c8;"></div>
  <div class="a" style="left:694.5px;top:379.5px;width:0;height:0;border-left:3px solid transparent;border-right:3px solid transparent;border-top:4.5px solid #9a9a9a;"></div>
  <svg class="a" style="left:704px;top:375px;" width="13" height="13" viewBox="0 0 13 13">
    <path d="M1,3 L4,3 L8,9 L11,9 M1,9 L4,9 L8,3 L11,3" fill="none" stroke="#a898e0" stroke-width="1.2"/>
    <circle cx="8.5" cy="9.5" r="2.8" fill="#30b050"/>
    <circle cx="8.5" cy="9.5" r="1.2" fill="#e8e8e8"/>
  </svg>
  <div class="cb" style="left:719px;top:376px;"></div>
  <div class="t b" style="left:731px;top:375px;color:#d8d8d8;">Sprite Resolver</div>
  <div class="t" style="left:704px;top:391px;">Category</div>
  <div class="drp" style="left:827px;top:391px;width:160px;height:11px;"></div>
  <div class="t" style="left:829px;top:390.5px;color:#e0e0e0;">hand_l</div>
  <div class="t" style="left:704px;top:404px;">Label</div>
  <div class="drp" style="left:827px;top:404.5px;width:160px;height:11px;"></div>
  <div class="t" style="left:829px;top:404px;color:#e0e0e0;">hand_l_front</div>
  <div class="a" style="left:703px;top:417px;width:280px;height:51px;background:#3f3f3f;"></div>
  <div class="a" style="left:703px;top:418px;width:44px;height:43.5px;background:#3d7bd0;"></div>
  
  <!-- material -->
  <div class="sep" style="top:473px;"></div>
  <div class="a" style="left:701px;top:477.5px;width:22px;height:22px;background:#5c5c5c;"></div>
  <div class="a" style="left:702.3px;top:478.3px;width:19.4px;height:19.4px;border-radius:50%;background:#f2f2f2;"></div>
  <div class="t" style="left:728.5px;top:476.5px;font-size:9.6px;color:#9c9c9c;">Sprite-Lit-Default (Material)</div>
  <div class="a" style="left:696px;top:499.5px;width:0;height:0;border-top:3px solid transparent;border-bottom:3px solid transparent;border-left:4.5px solid #8a8a8a;"></div>
  <div class="t" style="left:727px;top:494px;color:#9c9c9c;">Shader</div>
  <div class="a" style="left:761px;top:495px;width:194px;height:10.5px;background:#515151;border-radius:2px;"></div>
  <div class="t" style="left:763px;top:494px;color:#bcbcbc;">Universal Render Pipeline/2D/Sprite-Lit-Default</div>
  <div class="a" style="left:948px;top:499px;width:0;height:0;border-left:2.5px solid transparent;border-right:2.5px solid transparent;border-top:3px solid #c8c8c8;"></div>
  <div class="a" style="left:959px;top:494.5px;width:25px;height:11px;background:#515151;border-radius:2px;"></div>
  <div class="t" style="left:961px;top:494px;color:#c8c8c8;">Edit</div>
  <div class="a" style="left:695.5px;top:510.5px;width:5px;height:5px;border-radius:50%;background:#d8d8d8;"></div>
  <div class="t" style="left:703px;top:507px;color:#d0d0d0;">Ignored</div>
  <div class="sep" style="top:525px;"></div>
<svg class="a" style="left:0;top:0;" width="1024" height="640" viewBox="0 0 1024 640">
<defs><filter id="hb" x="-50%" y="-50%" width="200%" height="200%"><feGaussianBlur stdDeviation="2.5"/></filter><radialGradient id="hl" cx="0.6" cy="0.25" r="0.5"><stop offset="0" stop-color="#fcd8a8"/><stop offset="1" stop-color="#f7b2a0" stop-opacity="0"/></radialGradient></defs>
<path d="M723.3,418.8 C727.4,418.8 732.2,420.0 735.6,422.2 C739.0,424.4 742.1,428.6 743.8,431.8 C745.5,435.0 746.3,438.0 745.8,441.4 C745.3,444.8 743.4,449.4 741.0,452.3 C738.6,455.2 734.2,457.7 731.5,459.1 C728.8,460.5 726.6,460.5 724.6,460.5 C722.6,460.5 721.0,459.2 719.2,459.1 C717.4,459.0 715.1,460.5 713.7,459.8 C712.3,459.1 711.2,456.9 711.0,455.0 C710.8,453.1 713.2,450.5 712.3,448.2 C711.4,445.9 706.8,444.4 705.5,441.4 C704.2,438.4 703.9,433.6 704.8,430.4 C705.7,427.2 707.9,424.1 711.0,422.2 C714.1,420.3 719.2,418.8 723.3,418.8 Z" fill="#f8b4a2" stroke="#f2c4ae" stroke-width="0.9"/>
<path d="M713.7,433.2 C715,438 717,442.7 721,446 C727,449 733,446 736.9,440" fill="none" stroke="#dc6680" stroke-width="1.9" stroke-linecap="round"/>
<path d="M720.5,448.2 C720.5,452 721,455 721.9,457.8" fill="none" stroke="#dc6680" stroke-width="1.9" stroke-linecap="round"/>
<path d="M727.4,448.9 C728,452 729,455 730.1,457.8" fill="none" stroke="#dc6680" stroke-width="1.9" stroke-linecap="round"/>
<path d="M768.4,418.8 C772.7,419.0 779.1,422.4 782.1,425.0 C785.1,427.6 784.7,431.8 786.2,434.5 C787.7,437.2 790.5,438.9 791.0,441.4 C791.5,443.9 790.6,447.6 788.9,449.6 C787.2,451.7 783.4,452.1 780.7,453.7 C778.0,455.3 775.2,458.0 772.5,459.1 C769.8,460.2 766.8,460.7 764.3,460.5 C761.8,460.3 758.9,459.4 757.5,457.8 C756.1,456.2 757.2,453.2 756.1,450.9 C755.0,448.6 751.6,447.1 750.6,444.1 C749.6,441.2 749.0,436.6 749.9,433.2 C750.8,429.8 753.0,426.0 756.1,423.6 C759.2,421.2 764.1,418.6 768.4,418.8 Z" fill="#f8b4a2" stroke="#f2c4ae" stroke-width="0.9"/>
<path d="M760.2,426.3 C760,431 760.5,435 761.6,437.3 C764,440 767,441 769.8,441.4 C772,441.8 774,442 776.6,442.7" fill="none" stroke="#dc6680" stroke-width="1.9" stroke-linecap="round"/>
<path d="M765.7,441.4 C766,446 767,451 768.4,455" fill="none" stroke="#dc6680" stroke-width="1.9" stroke-linecap="round"/>
<path d="M775.2,442.7 C777,446 779,449 780.7,452.3" fill="none" stroke="#dc6680" stroke-width="1.9" stroke-linecap="round"/>
<path d="M820.4,418.8 C824.3,419.4 828.4,421.9 831.3,425.0 C834.1,428.1 836.8,433.4 837.5,437.3 C838.2,441.2 836.9,445.2 835.4,448.2 C833.9,451.1 831.6,452.8 828.6,455.0 C825.6,457.2 821.0,460.5 817.6,461.2 C814.2,461.9 810.8,460.4 808.1,459.1 C805.4,457.9 803.2,456.2 801.2,453.7 C799.2,451.2 796.2,448.0 795.8,444.1 C795.3,440.2 796.5,434.2 798.5,430.4 C800.5,426.6 804.5,423.4 808.1,421.5 C811.8,419.6 816.5,418.2 820.4,418.8 Z" fill="#f8b4a2" stroke="#f2c4ae" stroke-width="0.9"/>
<path d="M806,450 C811,452 816,455 819,459" fill="none" stroke="#dc6680" stroke-width="1.9" stroke-linecap="round"/>
<path d="M827,449 C829,451 831,452 833,453" fill="none" stroke="#dc6680" stroke-width="1.9" stroke-linecap="round"/>
<path d="M865.4,418.8 C869.7,419.4 874.8,421.5 877.7,425.0 C880.7,428.5 882.7,435.7 883.1,440.0 C883.5,444.3 882.2,447.9 880.4,450.9 C878.6,453.9 875.2,456.2 872.2,457.8 C869.2,459.4 865.8,460.5 862.6,460.5 C859.4,460.5 855.3,459.2 853.0,457.8 C850.7,456.4 850.5,455.0 848.9,452.3 C847.3,449.6 844.4,445.0 843.5,441.4 C842.6,437.8 842.1,433.7 843.5,430.4 C844.9,427.1 848.1,423.4 851.7,421.5 C855.4,419.6 861.1,418.2 865.4,418.8 Z" fill="#f8b4a2" stroke="#f2c4ae" stroke-width="0.9"/>
<path d="M858.5,426.3 C860,431 860,436 856.5,440" fill="none" stroke="#dc6680" stroke-width="1.9" stroke-linecap="round"/>
<path d="M860,437 C864,440 868,443 871.5,445.5" fill="none" stroke="#dc6680" stroke-width="1.9" stroke-linecap="round"/>
<path d="M857,443 C858,447 859,451 859.5,455" fill="none" stroke="#dc6680" stroke-width="1.9" stroke-linecap="round"/>
<path d="M865,446 C867,450 869,453 870.5,456" fill="none" stroke="#dc6680" stroke-width="1.9" stroke-linecap="round"/>
<path d="M909.1,418.8 C911.9,418.9 915.6,419.5 916.5,421.0 C917.4,422.5 914.0,425.7 914.6,427.7 C915.2,429.7 917.9,432.1 920.1,433.2 C922.3,434.3 926.1,433.1 927.6,434.5 C929.1,435.9 929.6,438.7 929.0,441.4 C928.4,444.1 926.6,447.9 924.2,450.9 C921.8,453.8 918.0,457.7 914.6,459.1 C911.2,460.5 907.4,460.2 903.7,459.1 C900.1,458.0 895.3,455.2 892.7,452.3 C890.1,449.4 888.1,445.5 887.9,441.4 C887.7,437.3 889.4,431.2 891.4,427.7 C893.4,424.2 896.6,421.7 899.6,420.2 C902.6,418.7 906.3,418.7 909.1,418.8 Z" fill="#f8b4a2" stroke="#f2c4ae" stroke-width="0.9"/>
<path d="M907,453 C911,454 915,455 919,454" fill="none" stroke="#dc6680" stroke-width="1.9" stroke-linecap="round"/>
<path d="M912,448 C916,448.5 920,448.5 923,448" fill="none" stroke="#dc6680" stroke-width="1.9" stroke-linecap="round"/>
<path d="M950.2,418.8 C954.1,419.0 960.1,421.4 963.9,423.6 C967.6,425.8 971.1,428.2 972.7,431.8 C974.3,435.4 974.0,442.1 973.4,445.5 C972.8,448.9 971.3,451.9 969.3,452.3 C967.2,452.8 963.1,448.6 961.1,448.2 C959.1,447.8 957.9,448.0 957.0,449.6 C956.1,451.2 956.7,455.9 955.6,457.8 C954.5,459.7 952.2,461.4 950.2,461.2 C948.2,461.0 945.6,459.2 943.3,456.4 C941.0,453.5 937.9,448.2 936.5,444.1 C935.1,440.0 934.4,435.5 935.1,431.8 C935.8,428.1 938.1,424.4 940.6,422.2 C943.1,420.0 946.3,418.6 950.2,418.8 Z" fill="#f8b4a2" stroke="#f2c4ae" stroke-width="0.9"/>
<path d="M966.5,428 C969,430 971,432 973,433.5" fill="none" stroke="#dc6680" stroke-width="1.9" stroke-linecap="round"/>
<path d="M965,433.5 C968,435.5 971,437.5 973,439" fill="none" stroke="#dc6680" stroke-width="1.9" stroke-linecap="round"/>
<clipPath id="hc3"><path d="M820.4,418.8 C824.3,419.4 828.4,421.9 831.3,425.0 C834.1,428.1 836.8,433.4 837.5,437.3 C838.2,441.2 836.9,445.2 835.4,448.2 C833.9,451.1 831.6,452.8 828.6,455.0 C825.6,457.2 821.0,460.5 817.6,461.2 C814.2,461.9 810.8,460.4 808.1,459.1 C805.4,457.9 803.2,456.2 801.2,453.7 C799.2,451.2 796.2,448.0 795.8,444.1 C795.3,440.2 796.5,434.2 798.5,430.4 C800.5,426.6 804.5,423.4 808.1,421.5 C811.8,419.6 816.5,418.2 820.4,418.8 Z"/></clipPath><clipPath id="hc5"><path d="M909.1,418.8 C911.9,418.9 915.6,419.5 916.5,421.0 C917.4,422.5 914.0,425.7 914.6,427.7 C915.2,429.7 917.9,432.1 920.1,433.2 C922.3,434.3 926.1,433.1 927.6,434.5 C929.1,435.9 929.6,438.7 929.0,441.4 C928.4,444.1 926.6,447.9 924.2,450.9 C921.8,453.8 918.0,457.7 914.6,459.1 C911.2,460.5 907.4,460.2 903.7,459.1 C900.1,458.0 895.3,455.2 892.7,452.3 C890.1,449.4 888.1,445.5 887.9,441.4 C887.7,437.3 889.4,431.2 891.4,427.7 C893.4,424.2 896.6,421.7 899.6,420.2 C902.6,418.7 906.3,418.7 909.1,418.8 Z"/></clipPath><clipPath id="hc6"><path d="M950.2,418.8 C954.1,419.0 960.1,421.4 963.9,423.6 C967.6,425.8 971.1,428.2 972.7,431.8 C974.3,435.4 974.0,442.1 973.4,445.5 C972.8,448.9 971.3,451.9 969.3,452.3 C967.2,452.8 963.1,448.6 961.1,448.2 C959.1,447.8 957.9,448.0 957.0,449.6 C956.1,451.2 956.7,455.9 955.6,457.8 C954.5,459.7 952.2,461.4 950.2,461.2 C948.2,461.0 945.6,459.2 943.3,456.4 C941.0,453.5 937.9,448.2 936.5,444.1 C935.1,440.0 934.4,435.5 935.1,431.8 C935.8,428.1 938.1,424.4 940.6,422.2 C943.1,420.0 946.3,418.6 950.2,418.8 Z"/></clipPath>
<g clip-path="url(#hc3)"><ellipse cx="829" cy="428" rx="8" ry="6" fill="#fcd49c" opacity="0.55" filter="url(#hb)"/></g>
<g clip-path="url(#hc5)"><ellipse cx="896" cy="447" rx="5" ry="6" fill="#fcd49c" opacity="0.5" filter="url(#hb)"/></g>
<g clip-path="url(#hc6)"><ellipse cx="952" cy="426" rx="8" ry="5" fill="#fcd49c" opacity="0.5" filter="url(#hb)"/></g>
</svg>
</div>
</body></html>
